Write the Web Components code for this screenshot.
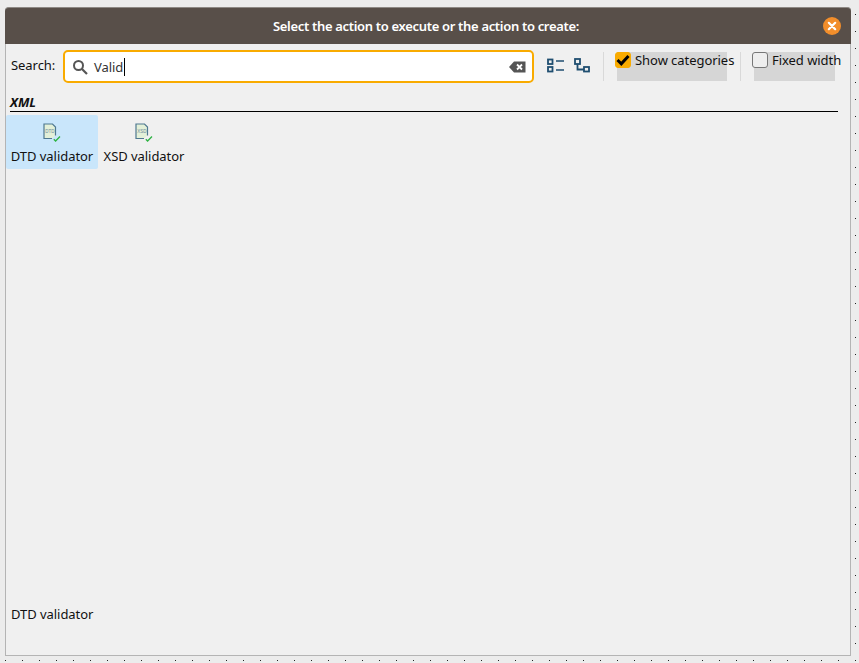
<!DOCTYPE html>
<html>
<head>
<meta charset="utf-8">
<style>
  html, body { margin: 0; height: 100%; }
  body {
    width: 859px;
    height: 663px;
    overflow: hidden;
    box-sizing: border-box;
    padding: 7px 8px 7px 5px;
    font: 13px "Noto Sans", sans-serif;
    letter-spacing: -0.05px;
    color: #111;
    background-color: #ececec;
    background-image: radial-gradient(circle at 5.5px 14.5px, #222 0.75px, transparent 0.85px);
    background-size: 17px 17px;
  }
</style>
</head>
<body>
<action-dialog>
  <span slot="title">Select the action to execute or the action to create:</span>
  <search-bar value="Valid"></search-bar>
  <action-category name="XML">
    <action-item selected kind="DTD">DTD validator</action-item>
    <action-item kind="XSD">XSD validator</action-item>
  </action-category>
  <span slot="status">DTD validator</span>
</action-dialog>

<script>
const dialogTemplate = document.createElement("template");
dialogTemplate.innerHTML = `
  <style>
    :host {
      display: flex;
      flex-direction: column;
      width: 846px;
      height: 649px;
      box-sizing: border-box;
      background: #f0f0f0;
      border: 1px solid #b4b4b4;
      border-top: 0;
      border-radius: 4px 4px 0 0;
    }
    .titleBar {
      flex: none;
      height: 37px;
      margin: 0 -1px;
      padding-right: 4px;
      display: flex;
      align-items: center;
      justify-content: center;
      position: relative;
      background: #584f49;
      color: #fff;
      font-size: 13px;
      font-weight: 600;
      letter-spacing: -0.32px;
      border-radius: 4px 4px 0 0;
      border-top: 1px solid #8e8985;
      box-sizing: border-box;
    }
    .close {
      position: absolute;
      right: 10px;
      top: 9px;
      width: 18px;
      height: 18px;
    }
    .body { flex: 1; display: flex; flex-direction: column; min-height: 0; }
    .status { flex: none; padding: 0 0 31px 5px; line-height: 19px; }
  </style>
  <header class="titleBar">
    <slot name="title"></slot>
    <svg class="close" viewBox="0 0 18 18">
      <circle cx="9" cy="9" r="9" fill="#f28e2b"/>
      <path d="M5.8 5.8l6.4 6.4M12.2 5.8l-6.4 6.4" stroke="#fff" stroke-width="2.2" stroke-linecap="round"/>
    </svg>
  </header>
  <div class="body"><slot></slot></div>
  <div class="status"><slot name="status"></slot></div>
`;
class ActionDialog extends HTMLElement {
  constructor() {
    super();
    this.attachShadow({ mode: "open" }).appendChild(dialogTemplate.content.cloneNode(true));
  }
}
customElements.define("action-dialog", ActionDialog);

const searchTemplate = document.createElement("template");
searchTemplate.innerHTML = `
  <style>
    :host {
      display: flex;
      align-items: flex-start;
      height: 37px;
      padding: 6px 0 0 5px;
      box-sizing: border-box;
      flex: none;
    }
    .label { width: 52px; line-height: 31px; flex: none; }
    .input {
      flex: none;
      width: 471px;
      height: 33px;
      box-sizing: border-box;
      display: flex;
      align-items: center;
      background: #fff;
      border: 2px solid #f9ab00;
      border-radius: 5px;
      padding: 0 6px 0 7px;
    }
    .input svg { flex: none; }
    .text { margin-left: 6px; flex: 1; line-height: 20px; display: flex; align-items: center; color: #333; }
    .caret { width: 1px; height: 18px; background: #000; margin-left: 1px; }
    .tools { display: flex; gap: 9px; margin: 8px 0 0 13px; flex: none; }
    .sep { width: 1px; height: 29px; background: #d9d9d9; flex: none; margin: 2px 0 0 12px; }
    .sep.next { margin-left: 13px; }
  </style>
  <span class="label">Search:</span>
  <div class="input">
    <svg width="16" height="16" viewBox="0 0 16 16">
      <circle cx="6.5" cy="6.5" r="4.5" fill="none" stroke="#555" stroke-width="2"/>
      <path d="M10 10l5 5" stroke="#555" stroke-width="2.2"/>
    </svg>
    <span class="text"><span class="value"></span><span class="caret"></span></span>
    <svg width="17" height="12" viewBox="0 0 17 12">
      <path d="M5 0.5h11.5v11H5L0 6z" fill="#555"/>
      <path d="M8 3.5l5 5M13 3.5l-5 5" stroke="#fff" stroke-width="1.8"/>
    </svg>
  </div>
  <div class="tools">
    <svg width="18" height="15" viewBox="0 0 18 15" fill="none" stroke="#1f4e70" stroke-width="1.8">
      <rect x="1" y="1.5" width="4.5" height="4.5"/><rect x="1" y="9" width="4.5" height="4.5"/>
      <path d="M9 3h8M9 12h8" stroke-width="1.5"/>
    </svg>
    <svg width="17" height="15" viewBox="0 0 17 15" fill="none" stroke="#1f4e70" stroke-width="1.8">
      <rect x="1" y="1" width="5" height="5"/><rect x="10" y="9" width="5" height="4.5"/>
      <path d="M3.5 6v5.5h6.5"/>
    </svg>
  </div>
  <div class="sep"></div>
  <option-box checked width="110" style="margin-left:13px">Show categories</option-box>
  <div class="sep next"></div>
  <option-box width="81" style="margin-left:13px">Fixed width</option-box>
`;
class SearchBar extends HTMLElement {
  constructor() {
    super();
    const shadow = this.attachShadow({ mode: "open" });
    shadow.appendChild(searchTemplate.content.cloneNode(true));
    shadow.querySelector(".value").textContent = this.getAttribute("value");
  }
}
customElements.define("search-bar", SearchBar);

const optionTemplate = document.createElement("template");
optionTemplate.innerHTML = `
  <style>
    :host { display: block; flex: none; height: 29px; margin-top: 2px; background: #d6d6d6; }
    .row { display: flex; align-items: center; gap: 4px; margin-left: -2px; height: 16px; white-space: nowrap; }
    .box {
      flex: none;
      width: 16px;
      height: 16px;
      box-sizing: border-box;
      border: 1px solid #777;
      border-radius: 3px;
      background: #eee;
    }
    :host([checked]) .box { background: #f9ab00; border-color: #f9ab00; }
    svg { display: none; }
    :host([checked]) svg { display: block; margin: 0; }
  </style>
  <div class="row">
    <span class="box"><svg width="14" height="14" viewBox="0 0 14 14"><path d="M1.5 7l3.8 3.8L12.5 3" fill="none" stroke="#000" stroke-width="3"/></svg></span>
    <span><slot></slot></span>
  </div>
`;
class OptionBox extends HTMLElement {
  constructor() {
    super();
    this.attachShadow({ mode: "open" }).appendChild(optionTemplate.content.cloneNode(true));
    this.style.width = this.getAttribute("width") + "px";
  }
}
customElements.define("option-box", OptionBox);

const categoryTemplate = document.createElement("template");
categoryTemplate.innerHTML = `
  <style>
    :host { display: block; flex: 1; padding-top: 12px; }
    .name {
      margin: 0 12px 0 4px;
      height: 18px;
      line-height: 18px;
      font-weight: 700;
      font-style: italic;
      border-bottom: 1px solid #000;
    }
    .items { display: flex; margin-top: 3px; }
  </style>
  <div class="name"></div>
  <div class="items"><slot></slot></div>
`;
class ActionCategory extends HTMLElement {
  constructor() {
    super();
    const shadow = this.attachShadow({ mode: "open" });
    shadow.appendChild(categoryTemplate.content.cloneNode(true));
    shadow.querySelector(".name").textContent = this.getAttribute("name");
  }
}
customElements.define("action-category", ActionCategory);

const itemTemplate = document.createElement("template");
itemTemplate.innerHTML = `
  <style>
    :host {
      display: flex;
      flex-direction: column;
      align-items: center;
      width: 92px;
      height: 54px;
      box-sizing: border-box;
      padding-top: 8px;
      border-radius: 2px;
      white-space: nowrap;
    }
    :host([selected]) { background: #c9e6fb; }
    svg { display: block; margin-bottom: 5px; }
    text { font: 4.5px "Liberation Sans", sans-serif; letter-spacing: 0; fill: #6f8c9c; }
  </style>
  <svg width="18" height="19" viewBox="0 0 18 19">
    <path d="M9 15.5H1V1h8.5l3 3v8.5" fill="#e3f0d8" stroke="#4f7890" stroke-width="1.2"/>
    <text class="kind" x="2.2" y="9.5"></text>
    <path d="M10.8 16.2l1.8 1.8 4.4-4.5" fill="none" stroke="#2fb344" stroke-width="1.3"/>
  </svg>
  <span><slot></slot></span>
`;
class ActionItem extends HTMLElement {
  constructor() {
    super();
    const shadow = this.attachShadow({ mode: "open" });
    shadow.appendChild(itemTemplate.content.cloneNode(true));
    shadow.querySelector(".kind").textContent = this.getAttribute("kind");
  }
}
customElements.define("action-item", ActionItem);
</script>
</body>
</html>
